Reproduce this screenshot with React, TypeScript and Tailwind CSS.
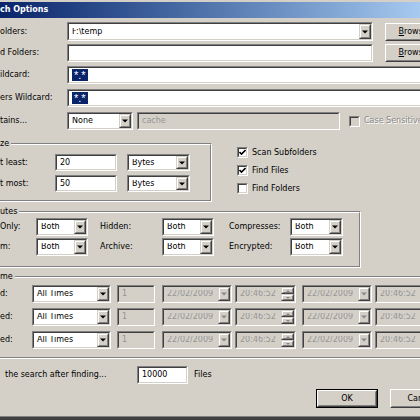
import React from "react";

type P = { className?: string; disabled?: boolean; children?: React.ReactNode };

function Sunken({ className = "", disabled = false, children }: P) {
  return (
    <div
      className={`flex shrink-0 border border-t-[#808080] border-l-[#808080] border-b-white border-r-white ${className}`}
    >
      <div
        className={`flex min-w-0 flex-1 items-center overflow-hidden border border-t-[#404040] border-l-[#404040] border-b-[#d4d0c8] border-r-[#d4d0c8] ${
          disabled ? "bg-[#d4d0c8]" : "bg-white"
        }`}
      >
        {children}
      </div>
    </div>
  );
}

function Raised({ className = "", children }: P) {
  return (
    <div
      className={`flex shrink-0 border border-t-[#d4d0c8] border-l-[#d4d0c8] border-b-[#404040] border-r-[#404040] ${className}`}
    >
      <div className="flex min-w-0 flex-1 items-center justify-center border border-t-white border-l-white border-b-[#808080] border-r-[#808080] bg-[#d4d0c8]">
        {children}
      </div>
    </div>
  );
}

function Arrow({ disabled = false, up = false, small = false }: { disabled?: boolean; up?: boolean; small?: boolean }) {
  if (small) {
    const pts = up ? "0,2 2,0 4,2" : "0,0 4,0 2,2";
    return (
      <svg width="4" height="2" viewBox="0 0 4 2" className="block">
        <polygon points={pts} fill={disabled ? "#8a8a8a" : "#000"} />
      </svg>
    );
  }
  return (
    <svg width="6" height="4" viewBox="0 0 6 4" className="block">
      <polygon points="0,0.5 6,0.5 3,3.5" fill={disabled ? "#8a8a8a" : "#000"} />
    </svg>
  );
}

function Combo({ className = "", disabled = false, text }: P & { text: string }) {
  return (
    <Sunken className={className} disabled={disabled}>
      <span
        className={`flex-1 truncate pl-[3px] ${disabled ? "text-[#959595]" : "text-black"}`}
      >
        {text}
      </span>
      <Raised className="h-full w-[12px]">
        <Arrow disabled={disabled} />
      </Raised>
    </Sunken>
  );
}

function TimeField({ className = "" }: P) {
  return (
    <Sunken className={className} disabled>
      <span className="flex-1 truncate pl-[3px] text-[#959595]">20:46:52</span>
      <div className="flex h-full w-[13px] shrink-0 flex-col">
        <Raised className="flex-1">
          <Arrow disabled up small />
        </Raised>
        <Raised className="flex-1">
          <Arrow disabled small />
        </Raised>
      </div>
    </Sunken>
  );
}

function Button({ className = "", isDefault = false, children }: P & { isDefault?: boolean }) {
  const inner = (
    <div className="flex h-full w-full border border-t-white border-l-white border-b-[#404040] border-r-[#404040]">
      <div className="flex flex-1 items-center justify-center border border-t-[#d4d0c8] border-l-[#d4d0c8] border-b-[#808080] border-r-[#808080] bg-[#d4d0c8] text-black">
        {children}
      </div>
    </div>
  );
  if (isDefault) {
    return <div className={`flex shrink-0 border border-black ${className}`}>{inner}</div>;
  }
  return <div className={`flex shrink-0 ${className}`}>{inner}</div>;
}

function Check({ checked = false, disabled = false }: { checked?: boolean; disabled?: boolean }) {
  return (
    <div className="flex h-[11px] w-[11px] shrink-0 border border-t-[#808080] border-l-[#808080] border-b-white border-r-white">
      <div
        className={`flex flex-1 items-center justify-center border border-t-[#404040] border-l-[#404040] border-b-[#d4d0c8] border-r-[#d4d0c8] ${
          disabled ? "bg-[#d4d0c8]" : "bg-white"
        }`}
      >
        {checked && (
          <svg width="7" height="7" viewBox="0 0 7 7" className="block">
            <path d="M0.5 3 L2.5 5 L6.5 1" stroke="#000" strokeWidth="1.6" fill="none" />
          </svg>
        )}
      </div>
    </div>
  );
}

function Group({
  className = "",
  label,
  noRight = false,
  children,
}: P & { label: string; noRight?: boolean }) {
  return (
    <div
      className={`relative shrink-0 ${
        noRight
          ? "border-t border-b border-t-[#808080] border-b-white"
          : "border-t border-r border-b border-t-[#808080] border-r-white border-b-white"
      } ${className}`}
    >
      <div
        className={`h-full ${
          noRight
            ? "border-t border-b border-t-white border-b-[#808080]"
            : "border-t border-r border-b border-t-white border-r-[#808080] border-b-[#808080]"
        }`}
      >
        {children}
      </div>
      <span className="absolute left-0 top-[-5px] bg-[#d4d0c8] pr-[2px] leading-[9px]">{label}</span>
    </div>
  );
}

function Row({ className = "", children }: P) {
  return <div className={`flex shrink-0 items-center ${className}`}>{children}</div>;
}

function Selected() {
  return (
    <span className="ml-[3px] flex h-[12px] items-start bg-[#0a246a] px-[2px] pt-[1px] font-['Liberation_Sans',sans-serif] text-[11px] leading-[11px] text-white">
      *.*
    </span>
  );
}

export default function App() {
  return (
    <div className="flex h-[420px] w-[420px] flex-col overflow-hidden bg-[#d4d0c8] font-['DejaVu_Sans',sans-serif] text-[8px] leading-none text-black">
      <div className="h-[2px] shrink-0" />
      <div className="flex h-[16px] shrink-0 items-center bg-gradient-to-r from-[#0a246a] to-[#a6caf0] font-bold text-white">
        ch Options
      </div>

      <Row className="mt-[4px] h-[19px]">
        <span className="w-[67px] shrink-0">olders:</span>
        <Combo className="h-full w-[306px]" text="F:\temp" />
        <Button className="ml-[12px] h-[18px] w-[64px]">
          <span>
            <span className="underline">B</span>rowse...
          </span>
        </Button>
      </Row>

      <Row className="mt-[3px] h-[18px]">
        <span className="w-[67px] shrink-0">d Folders:</span>
        <Sunken className="h-full w-[306px]" />
        <Button className="ml-[12px] h-[18px] w-[64px]">
          <span>
            <span className="underline">B</span>rowse...
          </span>
        </Button>
      </Row>

      <Row className="mt-[4px] h-[18px]">
        <span className="w-[67px] shrink-0">ildcard:</span>
        <Sunken className="h-full w-[400px]">
          <Selected />
        </Sunken>
      </Row>

      <Row className="mt-[5px] h-[18px]">
        <span className="w-[67px] shrink-0">ers Wildcard:</span>
        <Sunken className="h-full w-[400px]">
          <Selected />
        </Sunken>
      </Row>

      <Row className="mt-[5px] h-[18px]">
        <span className="w-[67px] shrink-0">tains...</span>
        <Combo className="h-full w-[66px]" text="None" />
        <Sunken className="ml-[4px] h-full w-[203px]" disabled>
          <span className="pl-[3px] text-[#959595]">cache</span>
        </Sunken>
        <div className="ml-[9px]">
          <Check disabled />
        </div>
        <span className="ml-[4px] shrink-0 text-[#8a8a8a] [text-shadow:1px_1px_0_#fff]">Case Sensitive</span>
      </Row>

      <div className="mt-[13px] flex shrink-0 items-start">
        <Group label="ze" className="h-[59px] w-[212px]">
          <Row className="mt-[9px] h-[17px]">
            <span className="w-[55px] shrink-0">t least:</span>
            <Sunken className="h-full w-[62px]">
              <span className="pl-[3px]">20</span>
            </Sunken>
            <Combo className="ml-[10px] h-full w-[63px]" text="Bytes" />
          </Row>
          <Row className="mt-[4px] h-[17px]">
            <span className="w-[55px] shrink-0">t most:</span>
            <Sunken className="h-full w-[62px]">
              <span className="pl-[3px]">50</span>
            </Sunken>
            <Combo className="ml-[10px] h-full w-[63px]" text="Bytes" />
          </Row>
        </Group>
        <div className="ml-[25px] mt-[4px] flex flex-col gap-[7px]">
          <Row className="h-[11px]">
            <Check checked />
            <span className="ml-[4px]">Scan Subfolders</span>
          </Row>
          <Row className="h-[11px]">
            <Check checked />
            <span className="ml-[4px]">Find Files</span>
          </Row>
          <Row className="h-[11px]">
            <Check />
            <span className="ml-[4px]">Find Folders</span>
          </Row>
        </div>
      </div>

      <Group label="utes" className="mt-[9px] h-[57px] w-[361px]">
        <Row className="mt-[5px] h-[18px]">
          <span className="w-[36px] shrink-0">Only:</span>
          <Combo className="h-full w-[52px]" text="Both" />
          <span className="ml-[12px] w-[62px] shrink-0">Hidden:</span>
          <Combo className="h-full w-[52px]" text="Both" />
          <span className="ml-[15px] w-[61px] shrink-0">Compresses:</span>
          <Combo className="h-full w-[53px]" text="Both" />
        </Row>
        <Row className="mt-[2px] h-[18px]">
          <span className="w-[36px] shrink-0">m:</span>
          <Combo className="h-full w-[52px]" text="Both" />
          <span className="ml-[12px] w-[62px] shrink-0">Archive:</span>
          <Combo className="h-full w-[52px]" text="Both" />
          <span className="ml-[15px] w-[61px] shrink-0">Encrypted:</span>
          <Combo className="h-full w-[53px]" text="Both" />
        </Row>
      </Group>

      <Group label="me" noRight className="mt-[8px] h-[83px] w-[440px]">
        {["d:", "ed:", "ed:"].map((l, i) => (
          <Row key={i} className={`${i === 0 ? "mt-[7px]" : "mt-[5px]"} h-[18px]`}>
            <span className="w-[32px] shrink-0">{l}</span>
            <Combo className="h-full w-[79px]" text="All Times" />
            <Sunken className="ml-[6px] h-full w-[38px]" disabled>
              <span className="pl-[3px] text-[#959595]">1</span>
            </Sunken>
            <Combo className="ml-[7px] h-full w-[70px]" disabled text="22/02/2009" />
            <TimeField className="ml-[3px] h-full w-[61px]" />
            <Combo className="ml-[6px] h-full w-[70px]" disabled text="22/02/2009" />
            <TimeField className="ml-[3px] h-full w-[61px]" />
          </Row>
        ))}
      </Group>

      <Row className="mt-[7px] h-[18px]">
        <span className="ml-[5px] w-[132px] shrink-0">the search after finding...</span>
        <Sunken className="h-full w-[51px]">
          <span className="pl-[3px]">10000</span>
        </Sunken>
        <span className="ml-[6px]">Files</span>
      </Row>

      <Row className="mt-[5px] h-[19px]">
        <Button isDefault className="ml-[316px] h-full w-[62px]">
          OK
        </Button>
        <Button className="ml-[12px] h-full w-[62px]">Cancel</Button>
      </Row>

      <div className="flex-1" />
      <div className="h-[1px] shrink-0 bg-[#808080]" />
      <div className="h-[3px] shrink-0 bg-[#404040]" />
    </div>
  );
}
